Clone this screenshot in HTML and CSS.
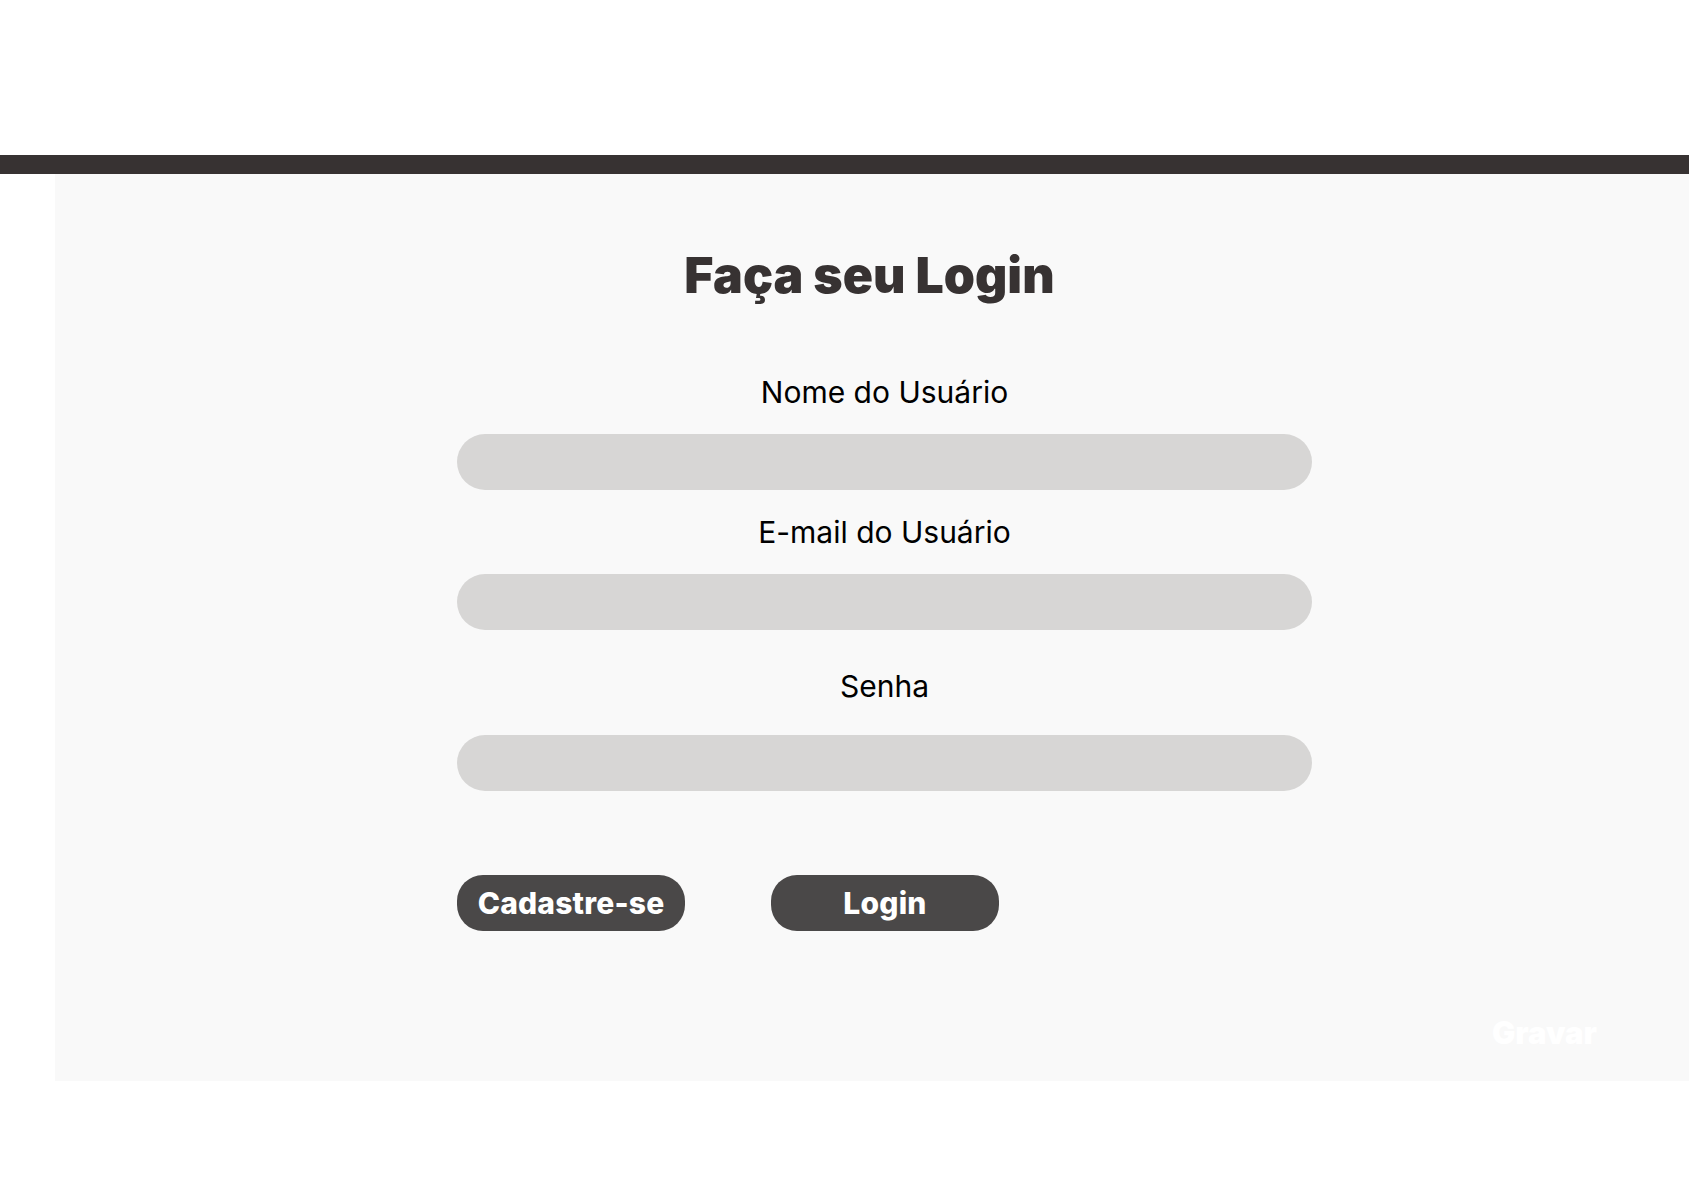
FILE: index.html
```html
<!DOCTYPE html>
<html lang="pt-BR">
<head>
<meta charset="utf-8">
<title>Faça seu Login</title>
<link rel="stylesheet" href="styles.css">
</head>
<body>
<header class="top-space"></header>
<div class="top-bar"></div>
<main class="panel">
  <h1 class="title">Faça seu Login</h1>
  <form class="form">
    <label class="field-label label-first">Nome do Usuário</label>
    <div class="field-input"></div>
    <label class="field-label label-second">E-mail do Usuário</label>
    <div class="field-input"></div>
    <label class="field-label label-third">Senha</label>
    <div class="field-input"></div>
    <div class="actions">
      <button type="button" class="btn">Cadastre-se</button>
      <button type="button" class="btn">Login</button>
    </div>
  </form>
  <div class="footer-row"><span class="gravar">Gravar</span></div>
</main>
</body>
</html>
```
FILE: styles.css
```css
* { box-sizing: border-box; }
html, body { margin: 0; padding: 0; background: #ffffff; }
body { font-family: Inter, "Noto Sans", sans-serif; width: 1689px; height: 1182px; overflow: hidden; }
.top-space { height: 155px; }
.top-bar { height: 19px; background: #373232; }
.panel {
  margin-left: 55px;
  height: 907px;
  background: #f9f9f9;
  padding-top: 71px;
  display: flex;
  flex-direction: column;
}
.title {
  margin: 0;
  padding-right: 5px;
  text-align: center;
  font-size: 50px;
  line-height: 60px;
  font-weight: 900;
  color: #373232;
}
.form {
  margin-left: 402px;
  width: 855px;
  display: flex;
  flex-direction: column;
}
.field-label {
  display: block;
  text-align: center;
  font-size: 30px;
  line-height: 34px;
  color: #000;
  font-weight: 400;
}
.label-first { margin-top: 70px; margin-bottom: 25px; }
.label-second { margin-top: 25px; margin-bottom: 25px; }
.label-third { margin-top: 39px; margin-bottom: 32px; }
.field-input {
  height: 56px;
  border-radius: 28px;
  background: #d7d6d5;
}
.actions {
  margin-top: 84px;
  display: flex;
  gap: 86px;
}
.btn {
  width: 228px;
  height: 56px;
  border: none;
  border-radius: 26px;
  background: #4a4848;
  color: #ffffff;
  font-family: Inter, "Noto Sans", sans-serif;
  font-size: 30px;
  font-weight: 800;
  letter-spacing: 0.2px;
  padding: 0;
}
.footer-row {
  margin-top: auto;
  padding: 0 92px 28px 0;
  text-align: right;
}
.gravar {
  font-size: 31px;
  line-height: 40px;
  font-weight: 900;
  color: #ffffff;
}
```
